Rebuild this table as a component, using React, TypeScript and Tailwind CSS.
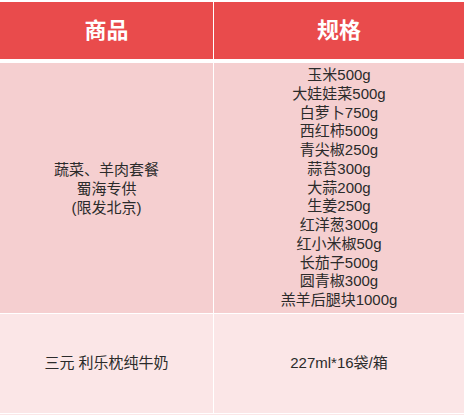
import React from 'react';

const specs = [
  '玉米500g',
  '大娃娃菜500g',
  '白萝卜750g',
  '西红柿500g',
  '青尖椒250g',
  '蒜苔300g',
  '大蒜200g',
  '生姜250g',
  '红洋葱300g',
  '红小米椒50g',
  '长茄子500g',
  '圆青椒300g',
  '羔羊后腿块1000g',
];

const font = "font-['Liberation_Sans','Noto_Sans_CJK_SC',sans-serif]";

const App: React.FC = () => {
  return (
    <div className={`w-[464px] h-[415px] bg-white pt-[2px] ${font}`}>
      <div className="grid grid-cols-[213px_1fr] gap-x-[1px]">
        <div className="h-[57px] bg-[#e94b4c] flex items-center justify-center text-white text-[22px] font-bold">
          商品
        </div>
        <div className="h-[57px] bg-[#e94b4c] flex items-center justify-center text-white text-[22px] font-bold">
          规格
        </div>
      </div>

      <div className="grid grid-cols-[213px_1fr] gap-x-[1px] mt-[4px]">
        <div className="h-[250px] bg-[#f5cfd0] flex flex-col items-center justify-center text-[15px] leading-[19px] text-[#2b2b2b] text-center">
          <span>蔬菜、羊肉套餐</span>
          <span>蜀海专供</span>
          <span>(限发北京)</span>
        </div>
        <div className="h-[250px] bg-[#f5cfd0] flex flex-col items-center justify-center text-[15px] leading-[18.75px] text-[#2b2b2b] text-center">
          {specs.map((s) => (
            <span key={s}>{s}</span>
          ))}
        </div>
      </div>

      <div className="grid grid-cols-[213px_1fr] gap-x-[1px] mt-[1px]">
        <div className="h-[99px] bg-[#fbe6e7] flex items-center justify-center text-[15px] text-[#2b2b2b]">
          三元 利乐枕纯牛奶
        </div>
        <div className="h-[99px] bg-[#fbe6e7] flex items-center justify-center text-[15px] text-[#2b2b2b]">
          227ml*16袋/箱
        </div>
      </div>
      <div className="h-[1px] mt-[1px] bg-[#fbe6e7]" />
    </div>
  );
};

export default App;
